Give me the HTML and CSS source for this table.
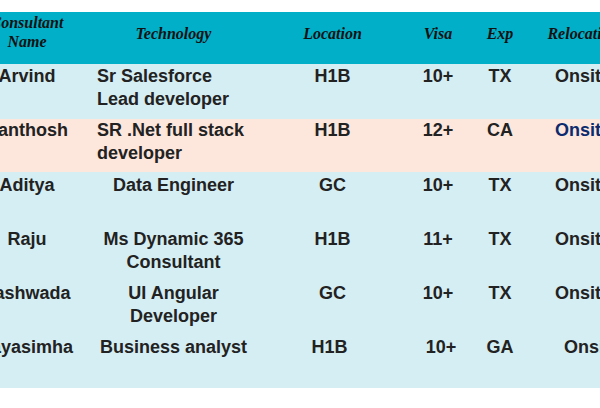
FILE: index.html
```html
<!DOCTYPE html>
<html>
<head>
<meta charset="utf-8">
<link rel="stylesheet" href="styles.css">
</head>
<body>
<table class="grid">
  <colgroup>
    <col class="c-name"><col class="c-tech"><col class="c-loc"><col class="c-visa"><col class="c-exp"><col class="c-rel">
  </colgroup>
  <thead>
    <tr class="head">
      <th>Consultant<br>Name</th>
      <th>Technology</th>
      <th>Location</th>
      <th>Visa</th>
      <th>Exp</th>
      <th>Relocation</th>
    </tr>
  </thead>
  <tbody>
    <tr class="row blue r1">
      <td>Arvind</td>
      <td class="left">Sr Salesforce<br>Lead developer</td>
      <td>H1B</td>
      <td>10+</td>
      <td>TX</td>
      <td>Onsite</td>
    </tr>
    <tr class="row peach r2">
      <td>Santhosh</td>
      <td class="left">SR .Net full stack<br>developer</td>
      <td>H1B</td>
      <td>12+</td>
      <td>CA</td>
      <td class="navy">Onsite</td>
    </tr>
    <tr class="row blue r3">
      <td>Aditya</td>
      <td>Data Engineer</td>
      <td>GC</td>
      <td>10+</td>
      <td>TX</td>
      <td>Onsite</td>
    </tr>
    <tr class="row blue r4">
      <td>Raju</td>
      <td>Ms Dynamic 365<br>Consultant</td>
      <td>H1B</td>
      <td>11+</td>
      <td>TX</td>
      <td>Onsite</td>
    </tr>
    <tr class="row blue r5">
      <td>Yashwada</td>
      <td>UI Angular<br>Developer</td>
      <td>GC</td>
      <td>10+</td>
      <td>TX</td>
      <td>Onsite</td>
    </tr>
    <tr class="row blue r6">
      <td>Jayasimha</td>
      <td>Business analyst</td>
      <td class="shift-l">H1B</td>
      <td class="shift-r">10+</td>
      <td>GA</td>
      <td class="shift-rr">Onsite</td>
    </tr>
  </tbody>
</table>
</body>
</html>
```
FILE: styles.css
```css
html, body {
  margin: 0;
  padding: 0;
  overflow: hidden;
  background: #ffffff;
}
body {
  padding-top: 12px;
  width: 600px;
  height: 396px;
}
.grid {
  border-collapse: collapse;
  table-layout: fixed;
  width: 670px;
  margin-left: -38px;
  font-family: "Liberation Sans", Arial, sans-serif;
}
.c-name { width: 130px; }
.c-tech { width: 163px; }
.c-loc { width: 155px; }
.c-visa { width: 56px; }
.c-exp { width: 68px; }
.c-rel { width: 98px; }

.head th {
  background: #01afc8;
  height: 42px;
  padding: 0 0 10px 0;
  font-family: "Liberation Serif", "Times New Roman", serif;
  font-style: italic;
  font-weight: bold;
  font-size: 16px;
  line-height: 19px;
  color: #111111;
  text-align: center;
  vertical-align: middle;
}
.head th:first-child {
  height: 40px;
  padding-bottom: 12px;
}

.row td {
  padding: 1px 0 0 0;
  vertical-align: top;
  text-align: center;
  font-weight: bold;
  font-size: 18px;
  line-height: 23px;
  color: #222222;
}
.row.r1 td { height: 54px; padding-top: 1px; }
.row.r2 td { height: 53px; padding-top: 0; }
.row.r3 td { height: 53px; padding-top: 2px; }
.row.r4 td { height: 53px; padding-top: 1px; }
.row.r5 td { height: 53px; padding-top: 1px; }
.row.r6 td { height: 52px; padding-top: 1px; }

.blue td { background: #d5eef3; }
.peach td { background: #fde7dc; }

.row td.left {
  text-align: left;
  padding-left: 5px;
}
.row td.navy { color: #0c2b6e; }
.row td.shift-l { padding-right: 6px; }
.row td.shift-r { padding-left: 6px; }
.row td.shift-rr { padding-left: 18px; }
```
